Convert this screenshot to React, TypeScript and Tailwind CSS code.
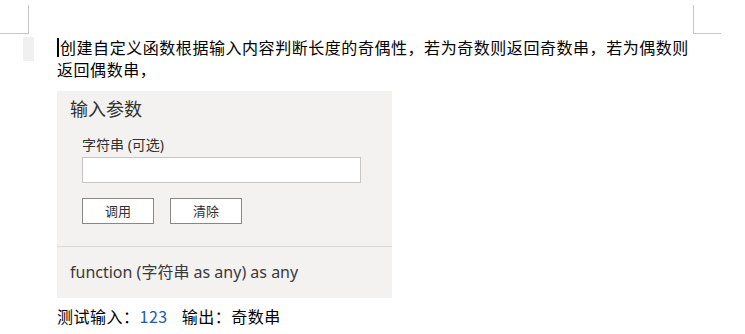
import React from "react";

export default function App() {
  return (
    <div className="w-[745px] h-[334px] overflow-hidden bg-white">
      {/* page corner marks */}
      <div className="flex pt-[5px]">
        <div className="w-[29px] h-[29px] border-r border-b border-[#c6c6c6]" />
        <div className="w-[664px]" />
        <div className="w-[28px] h-[29px] border-l border-b border-[#c6c6c6]" />
      </div>

      <div className="flex pt-[2px]">
        <div className="w-[57px] shrink-0 pl-[23px] pt-[1px]">
          <div className="h-[24px] w-[11px] bg-[#f0f0f0]" />
        </div>

        <div className="font-['Noto_Sans_CJK_SC',sans-serif] text-black">
          <div className="text-[16px] leading-[22px] tracking-[0.55px] w-[640px]">
            <span className="inline-block align-[-3px] h-[19px] w-[2px] bg-black mr-[1px]" />
            创建自定义函数根据输入内容判断长度的奇偶性，若为奇数则返回奇数串，若为偶数则返回偶数串，
          </div>

          <div className="mt-[11px] w-[335px] bg-[#f3f2f1] font-['Noto_Sans','Noto_Sans_CJK_SC',sans-serif] text-[#323130]">
            <div className="px-[13px] pt-[5px] pb-[22px]">
              <div className="text-[18px] leading-[26px]">输入参数</div>
              <div className="pl-[12px] mt-[13px]">
                <div className="text-[14px] leading-[19px]">字符串 (可选)</div>
                <div className="mt-[3px] h-[26px] w-[279px] border border-[#c8c6c4] bg-white" />
                <div className="mt-[15px] flex gap-[16px]">
                  <button className="h-[26px] w-[72px] border border-[#8a8886] bg-white text-[13px] leading-none text-[#323130]">
                    调用
                  </button>
                  <button className="h-[26px] w-[72px] border border-[#8a8886] bg-white text-[13px] leading-none text-[#323130]">
                    清除
                  </button>
                </div>
              </div>
            </div>
            <div className="h-px bg-[#dcdad8]" />
            <div className="px-[13px] pt-[13px] pb-[14px] text-[16px] leading-[24px] text-[#3b3a39]">
              function (字符串 as any) as any
            </div>
          </div>

          <div className="mt-[7px] text-[16px] leading-[22px] tracking-[0.5px]">
            测试输入：<span className="text-[#1f5aa6]">123</span>
            <span className="inline-block w-[14px]" />
            输出：奇数串
          </div>
        </div>
      </div>
    </div>
  );
}
